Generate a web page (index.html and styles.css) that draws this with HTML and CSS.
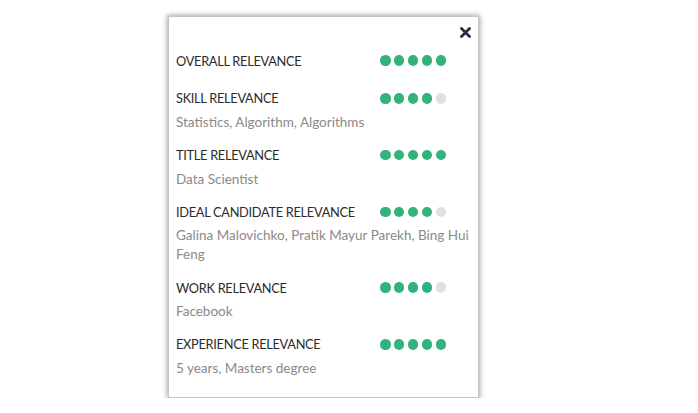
FILE: index.html
```html
<!DOCTYPE html>
<html>
<head>
<meta charset="utf-8">
<link rel="stylesheet" href="styles.css">
</head>
<body>
<div class="card">
  <div class="close-row">
    <svg class="close" width="11" height="11" viewBox="0 0 11 11"><path d="M1.5 1.5 L9.5 9.5 M9.5 1.5 L1.5 9.5" stroke="#2a2a45" stroke-width="2.8" stroke-linecap="round"/></svg>
  </div>
  <div class="item item-overall">
    <div class="head"><span class="title">OVERALL RELEVANCE</span><span class="dots"><i class="on"></i><i class="on"></i><i class="on"></i><i class="on"></i><i class="on"></i></span></div>
  </div>
  <div class="item">
    <div class="head"><span class="title">SKILL RELEVANCE</span><span class="dots"><i class="on"></i><i class="on"></i><i class="on"></i><i class="on"></i><i></i></span></div>
    <div class="sub">Statistics, Algorithm, Algorithms</div>
  </div>
  <div class="item">
    <div class="head"><span class="title">TITLE RELEVANCE</span><span class="dots"><i class="on"></i><i class="on"></i><i class="on"></i><i class="on"></i><i class="on"></i></span></div>
    <div class="sub">Data Scientist</div>
  </div>
  <div class="item">
    <div class="head"><span class="title">IDEAL CANDIDATE RELEVANCE</span><span class="dots"><i class="on"></i><i class="on"></i><i class="on"></i><i class="on"></i><i></i></span></div>
    <div class="sub">Galina Malovichko, Pratik Mayur Parekh, Bing Hui Feng</div>
  </div>
  <div class="item">
    <div class="head"><span class="title">WORK RELEVANCE</span><span class="dots"><i class="on"></i><i class="on"></i><i class="on"></i><i class="on"></i><i></i></span></div>
    <div class="sub">Facebook</div>
  </div>
  <div class="item">
    <div class="head"><span class="title">EXPERIENCE RELEVANCE</span><span class="dots"><i class="on"></i><i class="on"></i><i class="on"></i><i class="on"></i><i class="on"></i></span></div>
    <div class="sub">5 years, Masters degree</div>
  </div>
</div>
</body>
</html>
```
FILE: styles.css
```css
html, body {
  margin: 0;
  padding: 0;
  background: #ffffff;
}
body {
  font-family: "Lato", "Open Sans", sans-serif;
  padding: 16px 0 0 168px;
}
.card {
  box-sizing: border-box;
  width: 311px;
  height: 382px;
  border: 1px solid #c4c4c4;
  box-shadow: 0 0 5px 1px rgba(0,0,0,0.35);
  background: #fff;
  padding: 8px 6px 0 7px;
}
.close-row {
  display: flex;
  justify-content: flex-end;
  height: 14px;
  align-items: center;
  padding-right: 1px;
}
.close {
  display: block;
}
.item {
  margin-top: 13.75px;
}
.item-overall {
  margin-top: 12px;
  padding-bottom: 5px;
}
.head {
  display: flex;
  align-items: center;
  height: 19px;
}
.title {
  width: 204px;
  flex: none;
  font-size: 12.8px;
  color: #2b2b2b;
  letter-spacing: -0.3px;
}
.dots {
  display: flex;
  gap: 3.4px;
}
.dots i {
  display: block;
  width: 10.5px;
  height: 10.5px;
  border-radius: 50%;
  background: #e0e0e0;
}
.dots i.on {
  background: #32b27c;
}
.sub {
  margin-top: 5px;
  font-size: 13.5px;
  line-height: 19px;
  color: #8a8a8a;
}
```
